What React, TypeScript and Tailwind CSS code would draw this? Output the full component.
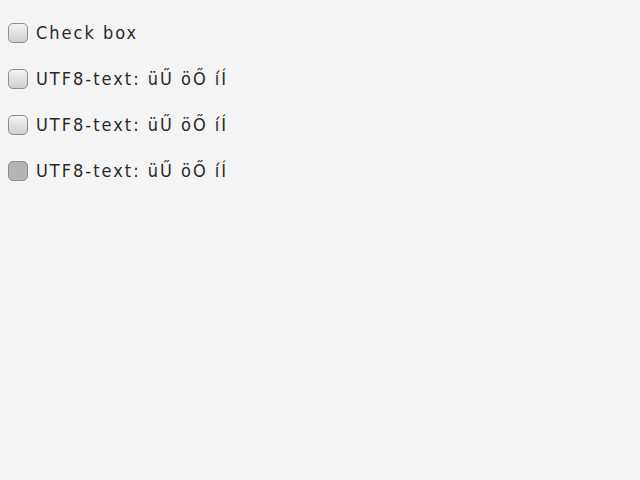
const rows = [
  { label: "Check box", pressed: false },
  { label: "UTF8-text: üŰ öŐ íÍ", pressed: false },
  { label: "UTF8-text: üŰ öŐ íÍ", pressed: false },
  { label: "UTF8-text: üŰ öŐ íÍ", pressed: true },
];

function Box({ pressed }: { pressed: boolean }) {
  return (
    <span
      className={
        "w-5 h-5 rounded-[5px] border border-[#8e8e8e] shrink-0 " +
        (pressed
          ? "bg-[#b4b4b4]"
          : "bg-gradient-to-b from-[#f4f4f4] to-[#cfcfcf]")
      }
    />
  );
}

export default function App() {
  return (
    <div className="w-[640px] h-[480px] bg-[#f4f4f4] font-['DejaVu_Sans',sans-serif] text-[#2a2a2a] pt-[23px] pl-2">
      <div className="flex flex-col gap-[26px]">
        {rows.map((r, i) => (
          <label key={i} className="flex items-center gap-2 h-5">
            <Box pressed={r.pressed} />
            <span className="text-[18px] font-stretch-condensed tracking-[2px] leading-5">{r.label}</span>
          </label>
        ))}
      </div>
    </div>
  );
}
